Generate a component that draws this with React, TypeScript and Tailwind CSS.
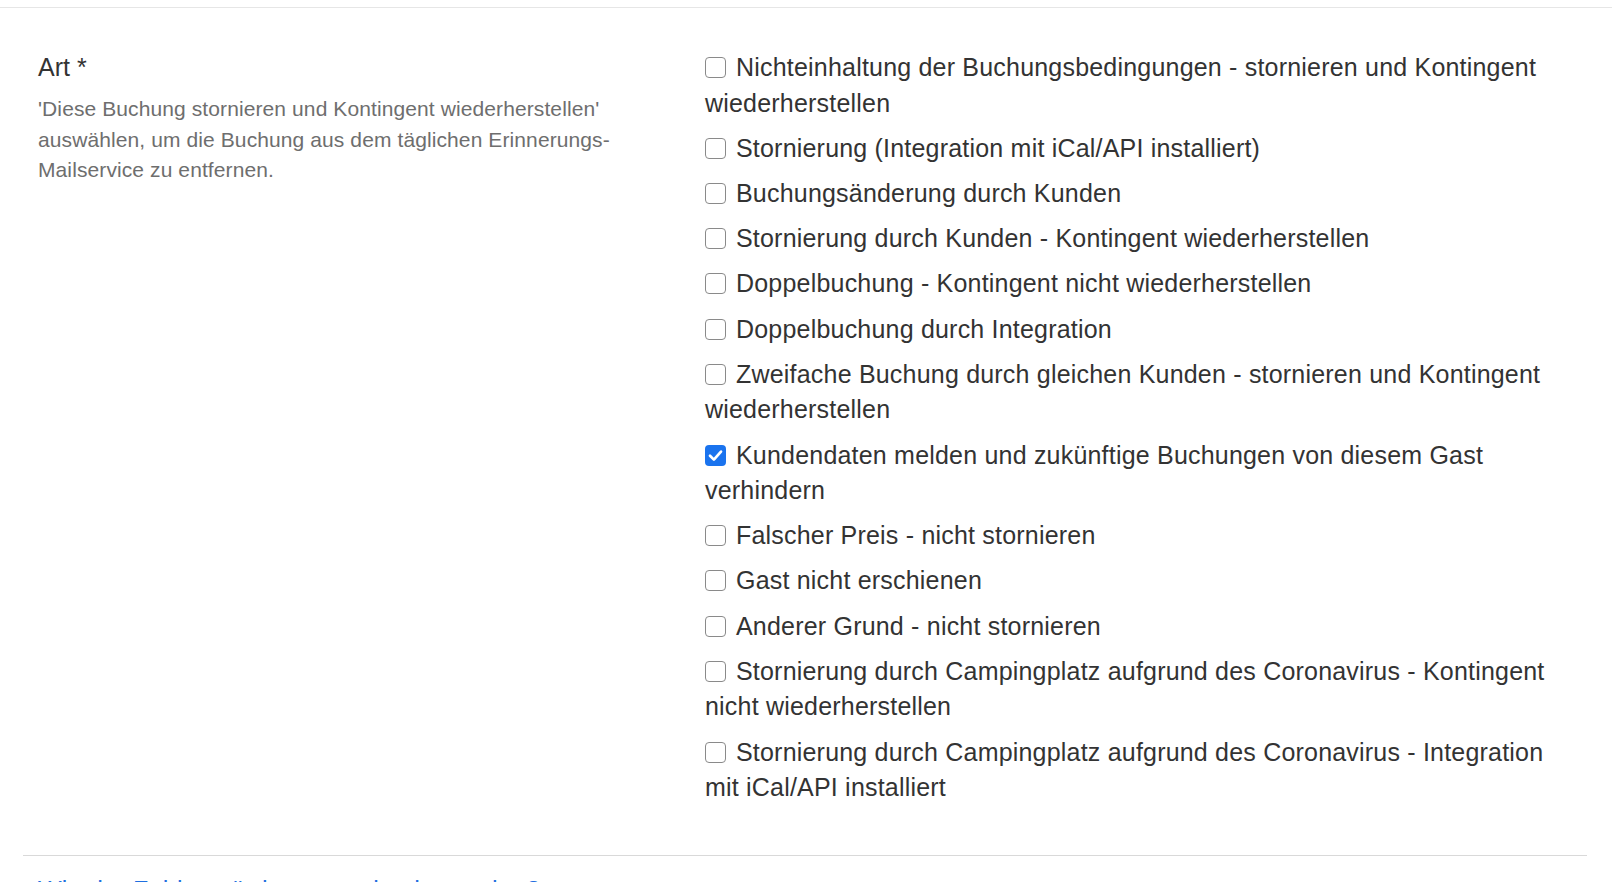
import { useState } from 'react'

const reasons = [
  'Nichteinhaltung der Buchungsbedingungen - stornieren und Kontingent wiederherstellen',
  'Stornierung (Integration mit iCal/API installiert)',
  'Buchungsänderung durch Kunden',
  'Stornierung durch Kunden - Kontingent wiederherstellen',
  'Doppelbuchung - Kontingent nicht wiederherstellen',
  'Doppelbuchung durch Integration',
  'Zweifache Buchung durch gleichen Kunden - stornieren und Kontingent wiederherstellen',
  'Kundendaten melden und zukünftige Buchungen von diesem Gast verhindern',
  'Falscher Preis - nicht stornieren',
  'Gast nicht erschienen',
  'Anderer Grund - nicht stornieren',
  'Stornierung durch Campingplatz aufgrund des Coronavirus - Kontingent nicht wiederherstellen',
  'Stornierung durch Campingplatz aufgrund des Coronavirus - Integration mit iCal/API installiert',
]

function Box({ checked }: { checked: boolean }) {
  if (checked) {
    return (
      <span className="mr-[10px] inline-block h-[21px] w-[21px] rounded-[4px] bg-[#1a73ee] align-[-2px]">
        <svg viewBox="0 0 21 21" className="h-[21px] w-[21px]">
          <path d="M5 10.8 L8.9 14.6 L16 6.6" fill="none" stroke="#fff" strokeWidth="2.7" strokeLinecap="round" strokeLinejoin="round" />
        </svg>
      </span>
    )
  }
  return (
    <span className="mr-[10px] inline-block h-[21px] w-[21px] rounded-[4px] border-[1.5px] border-[#8a8a8a] bg-white align-[-2px]" />
  )
}

export default function App() {
  const [selected, setSelected] = useState<number[]>([7])

  const toggle = (i: number) => {
    setSelected(prev => (prev.includes(i) ? prev.filter(x => x !== i) : [...prev, i]))
  }

  return (
    <div className="min-h-screen w-full bg-white font-['Liberation_Sans',Arial,sans-serif] text-[#333]">
      <div className="mt-[7px] h-px w-full bg-[#e6e6e6]" />

      <div className="pl-[23px] pr-[25px] pt-[42px]">
        <div className="flex">
          <div className="-mt-px w-[667px] shrink-0 px-[15px]">
            <div className="mb-[9px] text-[25px] leading-[36px]">Art *</div>
            <p className="text-[21px] leading-[30.5px] tracking-[0.1px] text-[#6e6e6e]">
              'Diese Buchung stornieren und Kontingent wiederherstellen' auswählen, um die Buchung aus dem täglichen Erinnerungs-Mailservice zu entfernen.
            </p>
          </div>

          <div className="flex-1 px-[15px]">
            {reasons.map((r, i) => (
              <div
                key={i}
                onClick={() => toggle(i)}
                className="mb-[9.6px] cursor-pointer text-[25px] leading-[35.6px] tracking-[0.2px] last:mb-0"
              >
                <Box checked={selected.includes(i)} />
                {r}
              </div>
            ))}
          </div>
        </div>

        <div className="mt-[49px] h-px w-full bg-[#d9d9d9]" />

        <div className="mt-[16px] px-[15px] text-[25px] leading-[36px] tracking-[0.25px] text-[#1f6fe0]">
          Wie der Fehler würde statt gebucht werden?
        </div>
      </div>
    </div>
  )
}
